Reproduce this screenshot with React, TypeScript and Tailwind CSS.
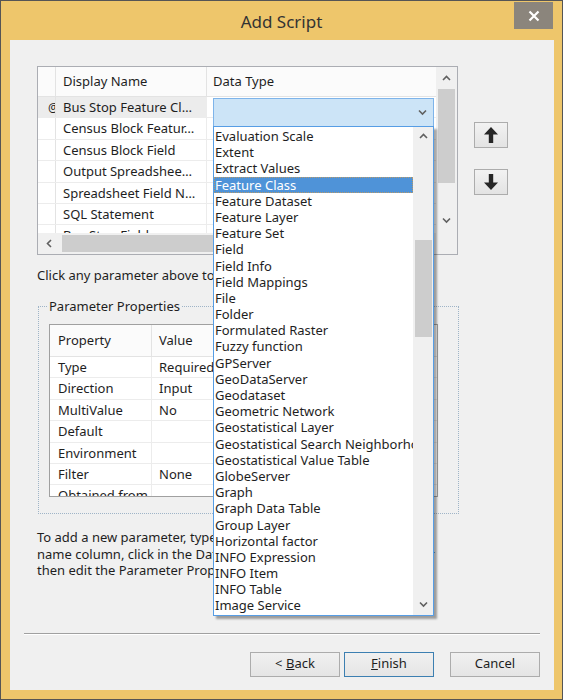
import React from 'react'

const params = [
  'Bus Stop Feature Cl…',
  'Census Block Featur…',
  'Census Block Field',
  'Output Spreadshee…',
  'Spreadsheet Field N…',
  'SQL Statement',
  'Bus Stop Field',
]

const dataTypes = [
  'Evaluation Scale',
  'Extent',
  'Extract Values',
  'Feature Class',
  'Feature Dataset',
  'Feature Layer',
  'Feature Set',
  'Field',
  'Field Info',
  'Field Mappings',
  'File',
  'Folder',
  'Formulated Raster',
  'Fuzzy function',
  'GPServer',
  'GeoDataServer',
  'Geodataset',
  'Geometric Network',
  'Geostatistical Layer',
  'Geostatistical Search Neighborhood',
  'Geostatistical Value Table',
  'GlobeServer',
  'Graph',
  'Graph Data Table',
  'Group Layer',
  'Horizontal factor',
  'INFO Expression',
  'INFO Item',
  'INFO Table',
  'Image Service',
]

const properties: [string, string][] = [
  ['Type', 'Required'],
  ['Direction', 'Input'],
  ['MultiValue', 'No'],
  ['Default', ''],
  ['Environment', ''],
  ['Filter', 'None'],
  ['Obtained from', ''],
]

function Chevron({ dir }: { dir: 'up' | 'down' | 'left' }) {
  const d = dir === 'up' ? 'M1 5L4.5 1.5L8 5' : dir === 'down' ? 'M1 1.5L4.5 5L8 1.5' : 'M5 1L1.5 4.5L5 8'
  return (
    <svg width="9" height="9" viewBox="0 0 9 9" className="block">
      <path d={d} fill="none" stroke="#606060" strokeWidth={1.6} />
    </svg>
  )
}

function MoveButton({ dir }: { dir: 'up' | 'down' }) {
  return (
    <button
      type="button"
      className="w-[34px] h-[26px] border border-[#acacac] bg-gradient-to-b from-[#f2f2f2] to-[#e3e3e3] flex items-center justify-center"
    >
      <svg width="16" height="18" viewBox="0 0 16 18" className={dir === 'down' ? 'rotate-180' : ''}>
        <path d="M8 1L15 8.5H10.2V17H5.8V8.5H1Z" fill="#262626" />
      </svg>
    </button>
  )
}

function DialogButton({ children, primary }: { children: React.ReactNode; primary?: boolean }) {
  return (
    <button
      type="button"
      className={
        'h-[25px] w-[90px] border bg-gradient-to-b from-[#f0f0f0] to-[#e5e5e5] text-[13px] text-[#1e1e1e] ' +
        (primary ? 'border-[#3c7fb1]' : 'border-[#acacac]')
      }
    >
      {children}
    </button>
  )
}

export default function App() {
  return (
    <div className="w-[563px] h-[700px] bg-[#eec66b] border border-[#555555] flex flex-col font-['Noto_Sans',sans-serif] text-[13px] text-[#1e1e1e] overflow-hidden">
      {/* title bar */}
      <div className="relative h-[39px] flex items-center justify-center">
        <span className="text-[17px] text-[#333333] mt-[2px]">Add Script</span>
        <div className="absolute right-[9px] top-[1px] w-[39px] h-[27px] bg-[#8b857c] flex items-center justify-center">
          <svg width="12" height="12" viewBox="0 0 12 12">
            <path d="M1.5 1.5L10.5 10.5M10.5 1.5L1.5 10.5" stroke="#ffffff" strokeWidth={2.2} />
          </svg>
        </div>
      </div>

      {/* client */}
      <div className="ml-[9px] w-[544px] h-[650px] bg-[#f0f0f0] flex flex-col">
        <div className="flex mt-[26px] ml-[27px]">
          {/* parameter grid */}
          <div className="relative w-[421px] h-[189px] border border-[#abadb3] bg-white">
            <div className="flex h-[166px]">
              <div className="w-[398px] overflow-hidden">
                <div className="flex h-[30px] border-b border-[#e3e3e3] bg-[#fbfbfb]">
                  <div className="w-[18px] border-r border-[#e3e3e3]" />
                  <div className="w-[151px] border-r border-[#e3e3e3] pl-[7px] flex items-center">Display Name</div>
                  <div className="flex-1 pl-[6px] flex items-center">Data Type</div>
                </div>
                {params.map((p, i) => (
                  <div key={p} className="flex h-[21.4px] border-b border-[#ececec]">
                    <div className={'w-[18px] border-r border-[#e3e3e3] overflow-hidden ' + (i === 0 ? 'bg-[#ececec]' : '')}>
                      {i === 0 && <span className="block pl-[10px] leading-[21px] text-[12px]">@</span>}
                    </div>
                    <div className={'w-[151px] border-r border-[#ececec] pl-[7px] leading-[20px] whitespace-nowrap overflow-hidden ' + (i === 0 ? 'bg-[#ececec]' : '')}>
                      {p}
                    </div>
                    <div className="flex-1" />
                  </div>
                ))}
              </div>
              {/* vertical scrollbar */}
              <div className="w-[21px] bg-[#f0f0f0] flex flex-col items-center">
                <div className="h-[20px] flex items-center justify-center mt-[2px]">
                  <Chevron dir="up" />
                </div>
                <div className="w-[17px] h-[94px] bg-[#cdcdcd]" />
                <div className="flex-1" />
                <div className="h-[20px] flex items-center justify-center mb-[2px]">
                  <Chevron dir="down" />
                </div>
              </div>
            </div>
            {/* horizontal scrollbar */}
            <div className="flex h-[21px]">
              <div className="w-[398px] bg-[#f0f0f0] flex items-center">
                <div className="w-[24px] flex justify-center">
                  <Chevron dir="left" />
                </div>
                <div className="w-[240px] h-[17px] bg-[#cdcdcd]" />
              </div>
              <div className="flex-1 bg-[#f0f0f0]" />
            </div>

            {/* combo box in edit */}
            <div className="absolute left-[175px] top-[31px] w-[221px] h-[29px] bg-[#cce4f7] border border-[#7eb4ea] flex items-end justify-end pr-[6px] pb-[8px]">
              <Chevron dir="down" />
            </div>

            {/* dropdown list */}
            <div className="absolute z-10 left-[175px] top-[59px] w-[221px] h-[490px] bg-white border border-[#569de5] shadow-[3px_3px_2px_rgba(0,0,0,0.35)] flex">
              <div className="w-[199px] pt-[1px] overflow-hidden">
                {dataTypes.map((t) => (
                  <div
                    key={t}
                    className={
                      'h-[16.2px] leading-[16px] pl-[1px] whitespace-nowrap ' +
                      (t === 'Feature Class' ? 'bg-[#4f93d8] text-white outline outline-1 outline-dotted outline-[#b89a6a] -outline-offset-1' : '')
                    }
                  >
                    {t}
                  </div>
                ))}
              </div>
              <div className="w-[20px] bg-[#f0f0f0] flex flex-col items-center">
                <div className="h-[20px] flex items-center justify-center">
                  <Chevron dir="up" />
                </div>
                <div className="h-[93px]" />
                <div className="w-[17px] h-[97px] bg-[#cdcdcd]" />
                <div className="flex-1" />
                <div className="h-[20px] flex items-center justify-center">
                  <Chevron dir="down" />
                </div>
              </div>
            </div>
          </div>

          {/* move up / down */}
          <div className="ml-[16px] mt-[56px] flex flex-col gap-[21px]">
            <MoveButton dir="up" />
            <MoveButton dir="down" />
          </div>
        </div>

        <p className="mt-[12px] ml-[27px] leading-[16px] whitespace-nowrap">Click any parameter above to view its properties.</p>

        {/* parameter properties group */}
        <div className="relative mt-[23px] ml-[28px] w-[421px] h-[208px] border border-dotted border-[#9fb4c7]">
          <span className="absolute left-[8px] top-[-10px] bg-[#f0f0f0] px-[2px] leading-[18px]">Parameter Properties</span>
          <div className="mt-[17px] ml-[10px] w-[389px] h-[173px] border border-[#a0a0a0] bg-white overflow-hidden">
            <div className="flex h-[32px] border-b border-[#e3e3e3] bg-[#fbfbfb]">
              <div className="w-[102px] border-r border-[#e3e3e3] pl-[8px] flex items-center">Property</div>
              <div className="flex-1 pl-[7px] flex items-center">Value</div>
            </div>
            {properties.map(([k, v]) => (
              <div key={k} className="flex h-[21.4px] border-b border-[#ececec]">
                <div className="w-[102px] border-r border-[#ececec] pl-[8px] leading-[20px] whitespace-nowrap">{k}</div>
                <div className="flex-1 pl-[7px] leading-[20px] whitespace-nowrap">{v}</div>
              </div>
            ))}
          </div>
        </div>

        <p className="mt-[15px] ml-[27px] leading-[16.5px] whitespace-nowrap">
          To add a new parameter, type the parameter name in the Display
          <br />
          name column, click in the Data Type column to select the type for
          <br />
          then edit the Parameter Properties.
        </p>

        <div className="mt-[54px] ml-[14px] w-[516px] h-[2px] border-t border-[#a0a0a0] border-b border-b-white" />

        <div className="mt-[17px] flex justify-end pr-[14px]">
          <DialogButton>
            &lt; <span className="underline">B</span>ack
          </DialogButton>
          <div className="w-[4px]" />
          <DialogButton primary>
            <span className="underline">F</span>inish
          </DialogButton>
          <div className="w-[16px]" />
          <DialogButton>Cancel</DialogButton>
        </div>
      </div>
    </div>
  )
}
